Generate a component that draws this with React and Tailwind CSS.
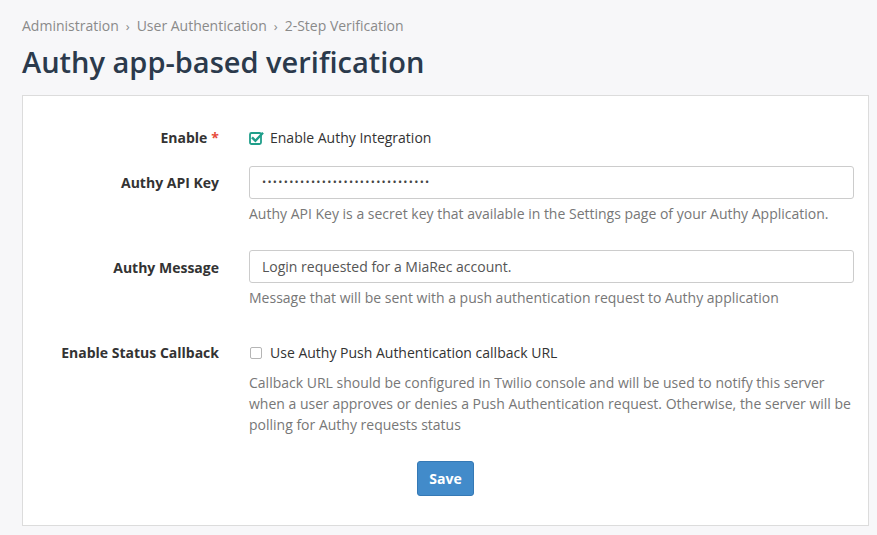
import React from "react";

function CheckedIcon() {
  return (
    <svg width="15" height="14" viewBox="0 0 15 14" className="shrink-0">
      <rect x="1" y="2" width="11" height="11" rx="1.5" fill="none" stroke="#1f9e8a" strokeWidth="1.8" />
      <path d="M3.8 7.2 L6.4 9.8 L13.2 2.6" fill="none" stroke="#1f9e8a" strokeWidth="2.4" strokeLinecap="square" />
    </svg>
  );
}

function Row({ label, required, children, labelClass = "" }) {
  return (
    <div className="flex">
      <div className={"w-[226px] shrink-0 pr-[30px] text-right font-bold text-[14px] text-[#333] " + labelClass}>
        {label}
        {required && <span className="text-[#e74c3c] ml-[4px]">*</span>}
      </div>
      <div className="flex-1 pr-[14px]">{children}</div>
    </div>
  );
}

export default function App() {
  return (
    <div
      className="min-h-[535px] bg-[#f7f7f9] pl-[22px] pr-[8px] pt-[16px]"
      style={{ fontFamily: '"Open Sans", sans-serif' }}
    >
      <div className="flex items-center text-[14px] leading-[20px] text-[#8a8a8a]">
        <span>Administration</span>
        <span className="mx-[7px] text-[13px]">›</span>
        <span>User Authentication</span>
        <span className="mx-[7px] text-[13px]">›</span>
        <span>2-Step Verification</span>
      </div>
      <h1 className="mt-[6px] text-[29px] leading-[40px] font-semibold text-[#2b3a4c]">
        Authy app-based verification
      </h1>
      <div className="mt-[13px] bg-white border border-[#dcdcdc] pt-[32px] pb-[29px]">
        <Row label="Enable" required labelClass="leading-[20px]">
          <div className="flex items-center gap-[6px] text-[14px] leading-[20px] text-[#333]">
            <CheckedIcon />
            <span>Enable Authy Integration</span>
          </div>
        </Row>

        <div className="mt-[18px]">
          <Row label="Authy API Key" labelClass="leading-[33px]">
            <div className="h-[33px] border border-[#ccc] rounded-[3px] flex items-center pl-[12px] text-[#444] text-[11px] tracking-[1.3px]">
              {"•".repeat(31)}
            </div>
            <div className="mt-[5px] text-[14px] leading-[20px] text-[#777]">
              Authy API Key is a secret key that available in the Settings page of your Authy Application.
            </div>
          </Row>
        </div>

        <div className="mt-[26px]">
          <Row label="Authy Message" labelClass="leading-[33px] pt-[1px]">
            <div className="h-[33px] border border-[#ccc] rounded-[3px] flex items-center pl-[12px] text-[#555] text-[14px]">
              Login requested for a MiaRec account.
            </div>
            <div className="mt-[5px] text-[14px] leading-[20px] text-[#777]">
              Message that will be sent with a push authentication request to Authy application
            </div>
          </Row>
        </div>

        <div className="mt-[35px]">
          <Row label="Enable Status Callback" labelClass="leading-[20px]">
            <div className="flex items-center gap-[8px] text-[14px] leading-[20px] text-[#333]">
              <span className="w-[12px] h-[12px] border border-[#b5b5b5] rounded-[2px] ml-[1px] shrink-0"></span>
              <span>Use Authy Push Authentication callback URL</span>
            </div>
            <div className="mt-[9px] text-[14px] leading-[21px] text-[#777]">
              Callback URL should be configured in Twilio console and will be used to notify this server when a user approves or denies a Push Authentication request. Otherwise, the server will be polling for Authy requests status
            </div>
          </Row>
        </div>

        <div className="mt-[26px] flex justify-center">
          <button className="h-[35px] w-[57px] bg-[#428bca] border border-[#3579b5] rounded-[3px] text-white font-bold text-[14px]">
            Save
          </button>
        </div>
      </div>
    </div>
  );
}
